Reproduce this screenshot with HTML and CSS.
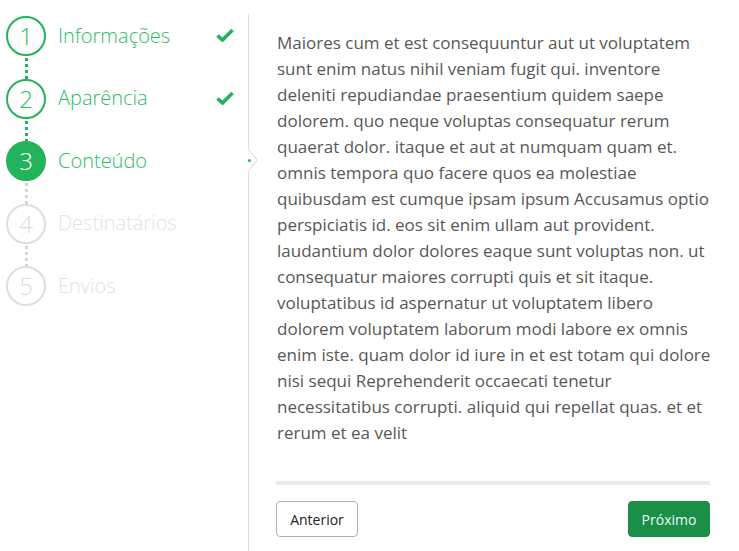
FILE: index.html
```html
<!DOCTYPE html>
<html lang="pt">
<head>
<meta charset="utf-8">
<title>Wizard</title>
<link rel="stylesheet" href="styles.css">
</head>
<body>
<div class="wizard">
  <nav class="steps">
    <div class="step done">
      <span class="circle">1</span>
      <span class="label">Informações</span>
      <svg class="check" viewBox="0 0 18 14" width="18" height="14"><path d="M1.5 7.5 L6.5 12 L16.5 2" fill="none" stroke="#22b35b" stroke-width="3.6" stroke-linejoin="miter" stroke-linecap="butt"/></svg>
    </div>
    <div class="line green"></div>
    <div class="step done">
      <span class="circle">2</span>
      <span class="label">Aparência</span>
      <svg class="check" viewBox="0 0 18 14" width="18" height="14"><path d="M1.5 7.5 L6.5 12 L16.5 2" fill="none" stroke="#22b35b" stroke-width="3.6" stroke-linejoin="miter" stroke-linecap="butt"/></svg>
    </div>
    <div class="line green"></div>
    <div class="step active">
      <span class="circle">3</span>
      <span class="label">Conteúdo</span>
    </div>
    <div class="line"></div>
    <div class="step">
      <span class="circle">4</span>
      <span class="label">Destinatários</span>
    </div>
    <div class="line"></div>
    <div class="step">
      <span class="circle">5</span>
      <span class="label">Envios</span>
    </div>
  </nav>
  <main class="content">
    <div class="pointer"><span class="dot"></span></div>
    <p class="text">Maiores cum et est consequuntur aut ut voluptatem sunt enim natus nihil veniam fugit qui. inventore deleniti repudiandae praesentium quidem saepe dolorem. quo neque voluptas consequatur rerum quaerat dolor. itaque et aut at numquam quam et. omnis tempora quo facere quos ea molestiae quibusdam est cumque ipsam ipsum Accusamus optio perspiciatis id. eos sit enim ullam aut provident. laudantium dolor dolores eaque sunt voluptas non. ut consequatur maiores corrupti quis et sit itaque. voluptatibus id aspernatur ut voluptatem libero dolorem voluptatem laborum modi labore ex omnis enim iste. quam dolor id iure in et est totam qui dolore nisi sequi Reprehenderit occaecati tenetur necessitatibus corrupti. aliquid qui repellat quas. et et rerum et ea velit</p>
    <hr class="sep">
    <div class="actions">
      <button class="btn btn-prev">Anterior</button>
      <button class="btn btn-next">Próximo</button>
    </div>
  </main>
</div>
</body>
</html>
```

FILE: styles.css
```css
* { box-sizing: border-box; }
html, body { margin: 0; padding: 0; background: #fff; }
body {
  font-family: "Open Sans", "Noto Sans", sans-serif;
  width: 739px;
  height: 551px;
  overflow: hidden;
}
.wizard {
  display: flex;
  margin-top: 14px;
  height: 537px;
}
.steps {
  width: 248px;
  flex: none;
  padding: 2px 14px 0 6px;
  display: flex;
  flex-direction: column;
}
.step {
  display: flex;
  align-items: center;
  height: 40px;
}
.circle {
  width: 40px;
  height: 40px;
  flex: none;
  border-radius: 50%;
  border: 2px solid #dedede;
  color: #dcdcdc;
  display: flex;
  align-items: center;
  justify-content: center;
  font-size: 24px;
  font-weight: 300;
  line-height: 1;
}
.label {
  margin-left: 12px;
  font-size: 20px;
  font-weight: 300;
  color: #e2e2e2;
  flex: 1;
  margin-top: -2px;
}
.done .circle, .active .circle { border-color: #22b35b; color: #2cbd63; }
.done .label, .active .label { color: #2dbd66; }
.active .circle { background: #22b35b; color: #fff; }
.check { flex: none; margin-top: -2px; }
.line {
  width: 3px;
  height: 22.5px;
  margin-left: 18.5px;
  background: repeating-linear-gradient(to bottom, transparent 0 2px, #d6d6d6 2px 5px, transparent 5px 6px);
}
.line.green {
  background: repeating-linear-gradient(to bottom, transparent 0 2px, #22b35b 2px 5px, transparent 5px 6px);
}
.content {
  position: relative;
  flex: 1;
  border-left: 1px solid #dddddd;
  padding: 16px 29px 0 28px;
}
.pointer {
  position: absolute;
  left: -1px;
  top: 134px;
  width: 12px;
  height: 24px;
  background: #fff;
  overflow: hidden;
}
.pointer::before, .pointer::after {
  content: "";
  position: absolute;
  left: 0;
  width: 15px;
  height: 1px;
  background: #dddddd;
}
.pointer::before { top: 0; transform-origin: left top; transform: rotate(50deg); left: 0; }
.pointer::after { bottom: 0; transform-origin: left bottom; transform: rotate(-50deg); left: 0; }
.dot {
  position: absolute;
  left: 0;
  top: 10.5px;
  width: 3px;
  height: 3px;
  border-radius: 50%;
  background: #22b35b;
}
.text {
  margin: 0 -5px 0 0;
  font-size: 17px;
  line-height: 26px;
  color: #585858;
}
.sep {
  margin: 35px 0 16px -1px;
  border: 0;
  height: 4px;
  background: #ebebeb;
}
.actions {
  display: flex;
  justify-content: space-between;
  margin-left: -1px;
}
.btn {
  font-family: "Open Sans", "Noto Sans", sans-serif;
  font-size: 14px;
  height: 36px;
  width: 82px;
  border-radius: 4px;
  padding: 0;
  cursor: pointer;
}
.btn-prev {
  background: #fff;
  border: 1px solid #b0b0b0;
  color: #222;
}
.btn-next {
  background: #1a8f48;
  border: 1px solid #1a8f48;
  color: #eef8f2;
}
```
